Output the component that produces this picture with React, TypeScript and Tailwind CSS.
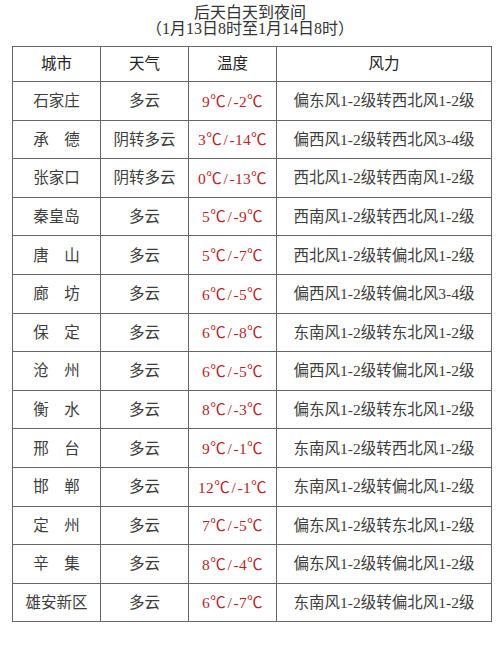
import React from "react";

const rows: [string, string, [string, string], string][] = [
  ["石家庄", "多云", ["9", "-2"], "偏东风1-2级转西北风1-2级"],
  ["承\u3000德", "阴转多云", ["3", "-14"], "偏西风1-2级转西北风3-4级"],
  ["张家口", "阴转多云", ["0", "-13"], "西北风1-2级转西南风1-2级"],
  ["秦皇岛", "多云", ["5", "-9"], "西南风1-2级转西北风1-2级"],
  ["唐\u3000山", "多云", ["5", "-7"], "西北风1-2级转偏北风1-2级"],
  ["廊\u3000坊", "多云", ["6", "-5"], "偏西风1-2级转偏北风3-4级"],
  ["保\u3000定", "多云", ["6", "-8"], "东南风1-2级转东北风1-2级"],
  ["沧\u3000州", "多云", ["6", "-5"], "偏西风1-2级转偏北风1-2级"],
  ["衡\u3000水", "多云", ["8", "-3"], "偏东风1-2级转东北风1-2级"],
  ["邢\u3000台", "多云", ["9", "-1"], "东南风1-2级转西北风1-2级"],
  ["邯\u3000郸", "多云", ["12", "-1"], "东南风1-2级转偏北风1-2级"],
  ["定\u3000州", "多云", ["7", "-5"], "偏东风1-2级转东北风1-2级"],
  ["辛\u3000集", "多云", ["8", "-4"], "偏东风1-2级转偏北风1-2级"],
  ["雄安新区", "多云", ["6", "-7"], "东南风1-2级转偏北风1-2级"],
];

const cjk = { fontFamily: '"Noto Sans CJK SC", sans-serif' };

function Temp({ hi, lo }: { hi: string; lo: string }) {
  return (
    <span className="tracking-[0.3px]">
      {hi}
      <span style={cjk}>℃</span>
      <span className="px-[1.5px]">/</span>
      {lo}
      <span style={cjk}>℃</span>
    </span>
  );
}

export default function App() {
  return (
    <div
      className="w-[500px] h-[646px] bg-white text-[#3d3d3d]"
      style={{ fontFamily: '"Liberation Serif", "Noto Sans CJK SC", serif' }}
    >
      <div className="pt-[5px] text-center text-[16px] leading-[16px] text-[#333]">
        <div>后天白天到夜间</div>
        <div>（1月13日8时至1月14日8时）</div>
      </div>
      <div className="pl-[12px] pt-[9px]">
        <table className="border-collapse text-[15.5px] table-fixed w-[479px]">
          <colgroup>
            <col className="w-[88px]" />
            <col className="w-[88px]" />
            <col className="w-[88px]" />
            <col className="w-[215px]" />
          </colgroup>
          <thead>
            <tr className="h-[35px] text-[#222]">
              <th className="border border-[#666] font-normal">城市</th>
              <th className="border border-[#666] font-normal">天气</th>
              <th className="border border-[#666] font-normal">温度</th>
              <th className="border border-[#666] font-normal">风力</th>
            </tr>
          </thead>
          <tbody>
            {rows.map((r, i) => (
              <tr key={i} className="h-[38.6px]">
                <td className="border border-[#666] text-center p-0">{r[0]}</td>
                <td className="border border-[#666] text-center p-0">{r[1]}</td>
                <td className="border border-[#666] text-center p-0 text-[#b3262b]">
                  <Temp hi={r[2][0]} lo={r[2][1]} />
                </td>
                <td className="border border-[#666] text-center p-0">{r[3]}</td>
              </tr>
            ))}
          </tbody>
        </table>
      </div>
    </div>
  );
}
